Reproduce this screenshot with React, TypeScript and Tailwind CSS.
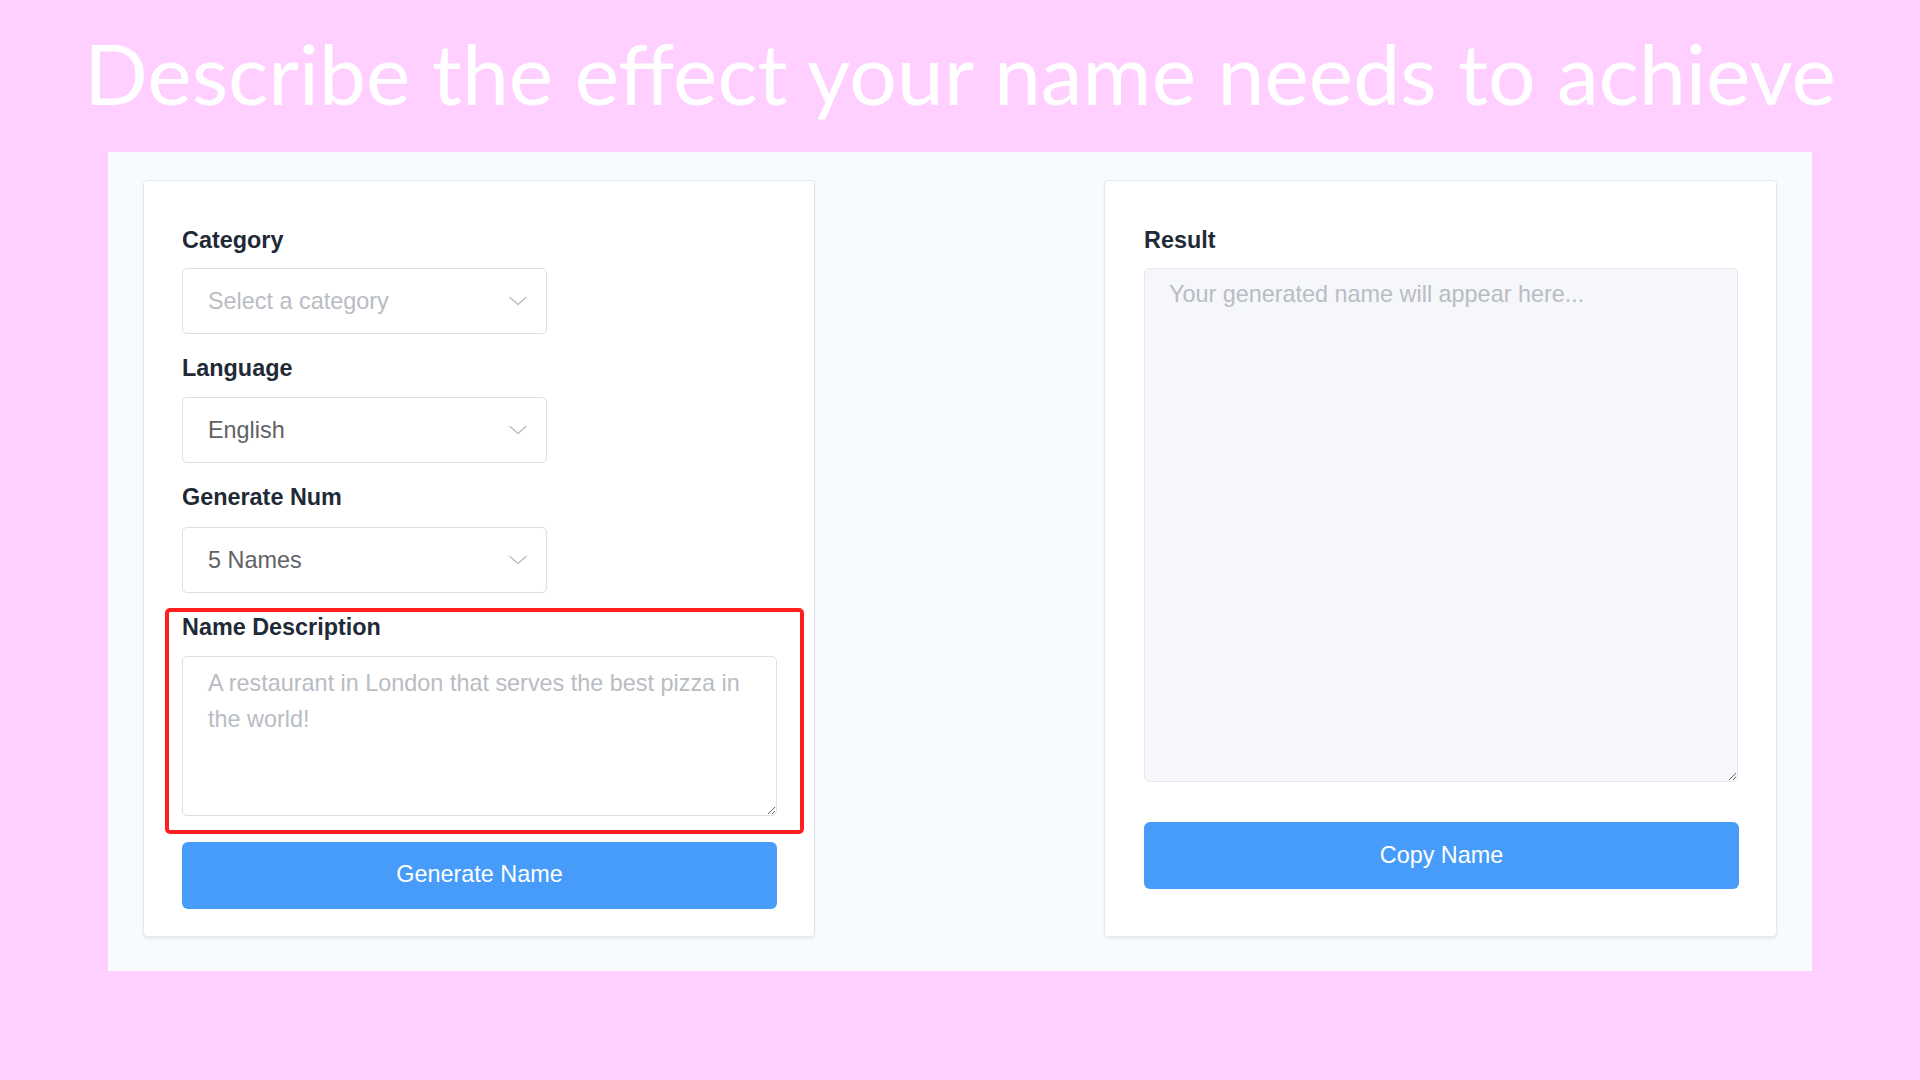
import React from "react"

const font = { fontFamily: '"Liberation Sans", Arial, sans-serif' }

function Chevron() {
  return (
    <svg width="18" height="10" viewBox="0 0 18 10" fill="none" className="shrink-0">
      <path d="M1 1.5 L9 8.5 L17 1.5" stroke="#b8bcc4" strokeWidth="1.4" strokeLinecap="round" strokeLinejoin="round" />
    </svg>
  )
}

function Label({ children }: { children: React.ReactNode }) {
  return <div className="text-[23.4px] leading-[24px] font-bold text-[#1f2a37]">{children}</div>
}

function FakeSelect({ value, placeholder, className }: { value?: string; placeholder?: string; className?: string }) {
  return (
    <div
      className={`w-[365px] h-[66px] rounded-[5px] border border-[#dcdfe6] bg-white flex items-center justify-between pl-[25px] pr-[19px] ${className ?? ""}`}
    >
      <span className={`pt-[2px] text-[23.4px] ${value ? "text-[#606266]" : "text-[#b9bcc3]"}`}>{value ?? placeholder}</span>
      <Chevron />
    </div>
  )
}

function Button({ children, className }: { children: React.ReactNode; className?: string }) {
  return (
    <button
      type="button"
      className={`w-[595px] h-[67px] rounded-[6px] bg-[#479cf9] text-white text-[23.4px] flex items-center justify-center ${className ?? ""}`}
    >
      {children}
    </button>
  )
}

export default function App() {
  return (
    <div className="w-full h-[1080px] bg-[#ffcfff] flex flex-col items-center" style={font}>
      <h1
        className="pt-[31px] text-[84px] leading-none text-white font-normal whitespace-nowrap"
        style={{ fontFamily: 'Lato, "Open Sans", sans-serif' }}
      >
        Describe the effect your name needs to achieve
      </h1>

      <div className="mt-[37px] w-[1704px] h-[819px] bg-[#f7fbfd] px-[35px] pt-[28px] flex justify-between">
        {/* form card */}
        <div className="w-[672px] h-[757px] bg-white border border-[#e4e7ed] rounded-[4px] shadow-[0_2px_3px_rgba(0,0,0,0.06)] pl-[38px] pt-[47px]">
          <Label>Category</Label>
          <FakeSelect className="mt-[16px]" placeholder="Select a category" />

          <div className="mt-[22px]">
            <Label>Language</Label>
          </div>
          <FakeSelect className="mt-[17px]" value="English" />

          <div className="mt-[22px]">
            <Label>Generate Num</Label>
          </div>
          <FakeSelect className="mt-[18px]" value="5 Names" />

          <div className="relative mt-[22px] w-[595px]">
            <Label>Name Description</Label>
            <textarea
              className="mt-[16.5px] block w-[595px] h-[160px] rounded-[5px] border border-[#dcdfe6] bg-white pl-[25px] pr-[22px] pt-[8px] text-[23.4px] leading-[36px] text-[#606266] placeholder:text-[#b9bcc3] outline-none"
              placeholder="A restaurant in London that serves the best pizza in the world!"
            />
            <div className="absolute -left-[17px] -right-[27px] -top-[7px] -bottom-[18px] border-[4px] border-[#ff1f1f] rounded-[5px] pointer-events-none" />
          </div>

          <Button className="mt-[26px]">Generate Name</Button>
        </div>

        {/* result card */}
        <div className="w-[673px] h-[757px] bg-white border border-[#e4e7ed] rounded-[4px] shadow-[0_2px_3px_rgba(0,0,0,0.06)] pl-[39px] pt-[47px]">
          <Label>Result</Label>
          <textarea
            readOnly
            className="mt-[16px] block w-[594px] h-[514px] rounded-[5px] border border-[#e4e7ed] bg-[#f5f7fa] pl-[24px] pr-[22px] pt-[7px] text-[23.4px] leading-[36px] text-[#606266] placeholder:text-[#b9bcc3] outline-none"
            placeholder="Your generated name will appear here..."
          />
          <Button className="mt-[40px]">Copy Name</Button>
        </div>
      </div>
    </div>
  )
}
